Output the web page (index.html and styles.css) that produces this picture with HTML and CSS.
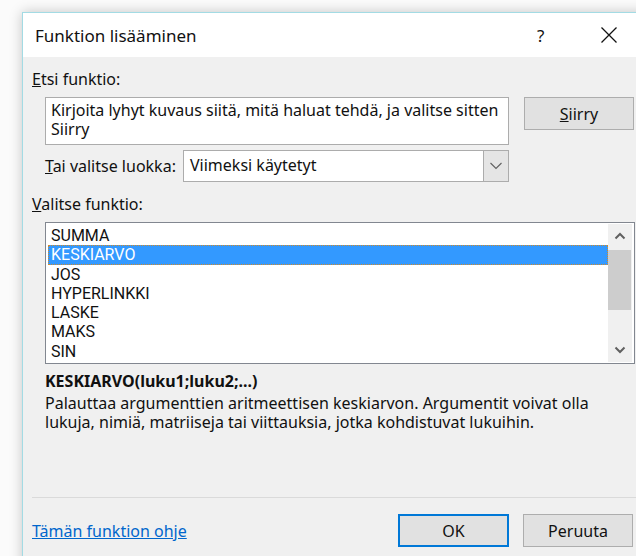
FILE: index.html
```html
<!DOCTYPE html>
<html lang="fi">
<head>
<meta charset="utf-8">
<title>Funktion lisääminen</title>
<link rel="stylesheet" href="styles.css">
</head>
<body>
<div class="dialog">
  <div class="titlebar">
    <span class="title">Funktion lisääminen</span>
    <span class="help">?</span>
    <span class="close">
      <svg width="16" height="16" viewBox="0 0 16 16"><path d="M0.5 0.5 L15.5 15.5 M15.5 0.5 L0.5 15.5" stroke="#111" stroke-width="1.3" fill="none"/></svg>
    </span>
  </div>
  <div class="content">
    <div class="label"><u>E</u>tsi funktio:</div>
    <div class="search-row">
      <div class="search-box">Kirjoita lyhyt kuvaus siitä, mitä haluat tehdä, ja valitse sitten Siirry</div>
      <button class="btn btn-go"><u>S</u>iirry</button>
    </div>
    <div class="category-row">
      <span class="cat-label"><u>T</u>ai valitse luokka:</span>
      <div class="select">
        <span class="select-value">Viimeksi käytetyt</span>
        <span class="select-arrow">
          <svg width="12" height="8" viewBox="0 0 12 8"><path d="M0.5 1 L6 6.5 L11.5 1" stroke="#606060" stroke-width="1.1" fill="none"/></svg>
        </span>
      </div>
    </div>
    <div class="label label-list"><u>V</u>alitse funktio:</div>
    <div class="listbox">
      <ul class="items">
        <li>SUMMA</li>
        <li class="selected">KESKIARVO</li>
        <li>JOS</li>
        <li>HYPERLINKKI</li>
        <li>LASKE</li>
        <li>MAKS</li>
        <li>SIN</li>
      </ul>
      <div class="scrollbar">
        <span class="arrow">
          <svg width="12" height="8" viewBox="0 0 12 8"><path d="M1.5 6.5 L6 2 L10.5 6.5" stroke="#606060" stroke-width="2" fill="none"/></svg>
        </span>
        <div class="track"><div class="thumb"></div></div>
        <span class="arrow">
          <svg width="12" height="8" viewBox="0 0 12 8"><path d="M1.5 1.5 L6 6 L10.5 1.5" stroke="#606060" stroke-width="2" fill="none"/></svg>
        </span>
      </div>
    </div>
    <div class="signature">KESKIARVO(luku1;luku2;...)</div>
    <p class="description">Palauttaa argumenttien aritmeettisen keskiarvon. Argumentit voivat olla lukuja, nimiä, matriiseja tai viittauksia, jotka kohdistuvat lukuihin.</p>
    <div class="separator"></div>
    <div class="footer">
      <a class="help-link" href="#">Tämän funktion ohje</a>
      <div class="buttons">
        <button class="btn btn-default">OK</button>
        <button class="btn">Peruuta</button>
      </div>
    </div>
  </div>
</div>
</body>
</html>
```

FILE: styles.css
```css
html, body {
  margin: 0;
  padding: 0;
  background: #fbfbfb;
  overflow: hidden;
  height: 556px;
}

body {
  font-family: "Noto Sans", "Open Sans", sans-serif;
  font-size: 16px;
  color: #111;
}

.dialog {
  margin: 12px 0 0 22px;
  width: 640px;
  height: 600px;
  background: #f0f0f0;
  border: 1px solid #a3dbe4;
  box-shadow: 0 0 12px rgba(0, 0, 0, 0.22);
}

.titlebar {
  height: 44px;
  background: #fff;
  display: flex;
  align-items: center;
  padding-left: 12px;
}

.title {
  font-size: 17px;
  flex: 1;
}

.help {
  font-size: 17px;
  width: 10px;
  margin-right: 54px;
}

.close {
  width: 16px;
  height: 16px;
  margin-right: 46px;
  display: flex;
}

.content {
  padding: 0 0 0 9px;
}

.label {
  height: 20px;
  line-height: 20px;
  margin-top: 12px;
}

.search-row {
  display: flex;
  align-items: flex-start;
  gap: 15px;
  margin: 8px 0 0 13px;
}

.search-box {
  box-sizing: border-box;
  width: 464px;
  height: 48px;
  background: #fff;
  border: 1px solid #acacac;
  padding: 3px 5px;
  line-height: 19px;
}

.btn {
  box-sizing: border-box;
  width: 110px;
  height: 33px;
  font: inherit;
  color: #111;
  background: #e1e1e1;
  border: 1px solid #adadad;
  padding: 0;
  line-height: 30px;
}

.btn-default {
  border: 2px solid #0078d7;
  width: 111px;
}

.category-row {
  display: flex;
  align-items: center;
  margin: 5px 0 0 13px;
}

.cat-label {
  width: 138px;
}

.select {
  box-sizing: border-box;
  width: 326px;
  height: 32px;
  display: flex;
  background: #fff;
  border: 1px solid #acacac;
}

.select-value {
  flex: 1;
  padding-left: 6px;
  line-height: 29px;
}

.select-arrow {
  width: 24px;
  background: #e5e5e5;
  border-left: 1px solid #acacac;
  display: flex;
  align-items: center;
  justify-content: center;
}

.label-list {
  margin-top: 12px;
}

.listbox {
  box-sizing: border-box;
  width: 590px;
  height: 142px;
  margin: 8px 0 0 13px;
  display: flex;
  background: #fff;
  border: 1px solid #828790;
}

.items {
  flex: 1;
  list-style: none;
  margin: 0;
  padding: 3px 0 0 2px;
  font-family: Roboto, "Noto Sans", sans-serif;
  font-size: 16px;
}

.items li {
  height: 19.3px;
  line-height: 19px;
  padding-left: 3px;
}

.items li.selected {
  background: #3399ff;
  color: #fff;
  outline: 1px dotted #d08a2a;
  outline-offset: -1px;
}

.scrollbar {
  width: 24px;
  margin: 1px 2px 1px 0;
  background: #f0f0f0;
  display: flex;
  flex-direction: column;
}

.arrow {
  height: 24px;
  display: flex;
  align-items: center;
  justify-content: center;
}

.track {
  flex: 1;
}

.thumb {
  margin: 2px 1px 0 0;
  height: 60px;
  background: #cdcdcd;
}

.signature {
  font-weight: bold;
  margin: 7px 0 0 13px;
  line-height: 20px;
}

.description {
  margin: 3px 0 0 13px;
  width: 570px;
  line-height: 19px;
}

.separator {
  margin-top: 65px;
  height: 1px;
  background: #dadada;
}

.footer {
  display: flex;
  align-items: center;
  margin-top: 16px;
  width: 601px;
}

.help-link {
  flex: 1;
  color: #0066cc;
}

.buttons {
  display: flex;
  gap: 14px;
}
```
